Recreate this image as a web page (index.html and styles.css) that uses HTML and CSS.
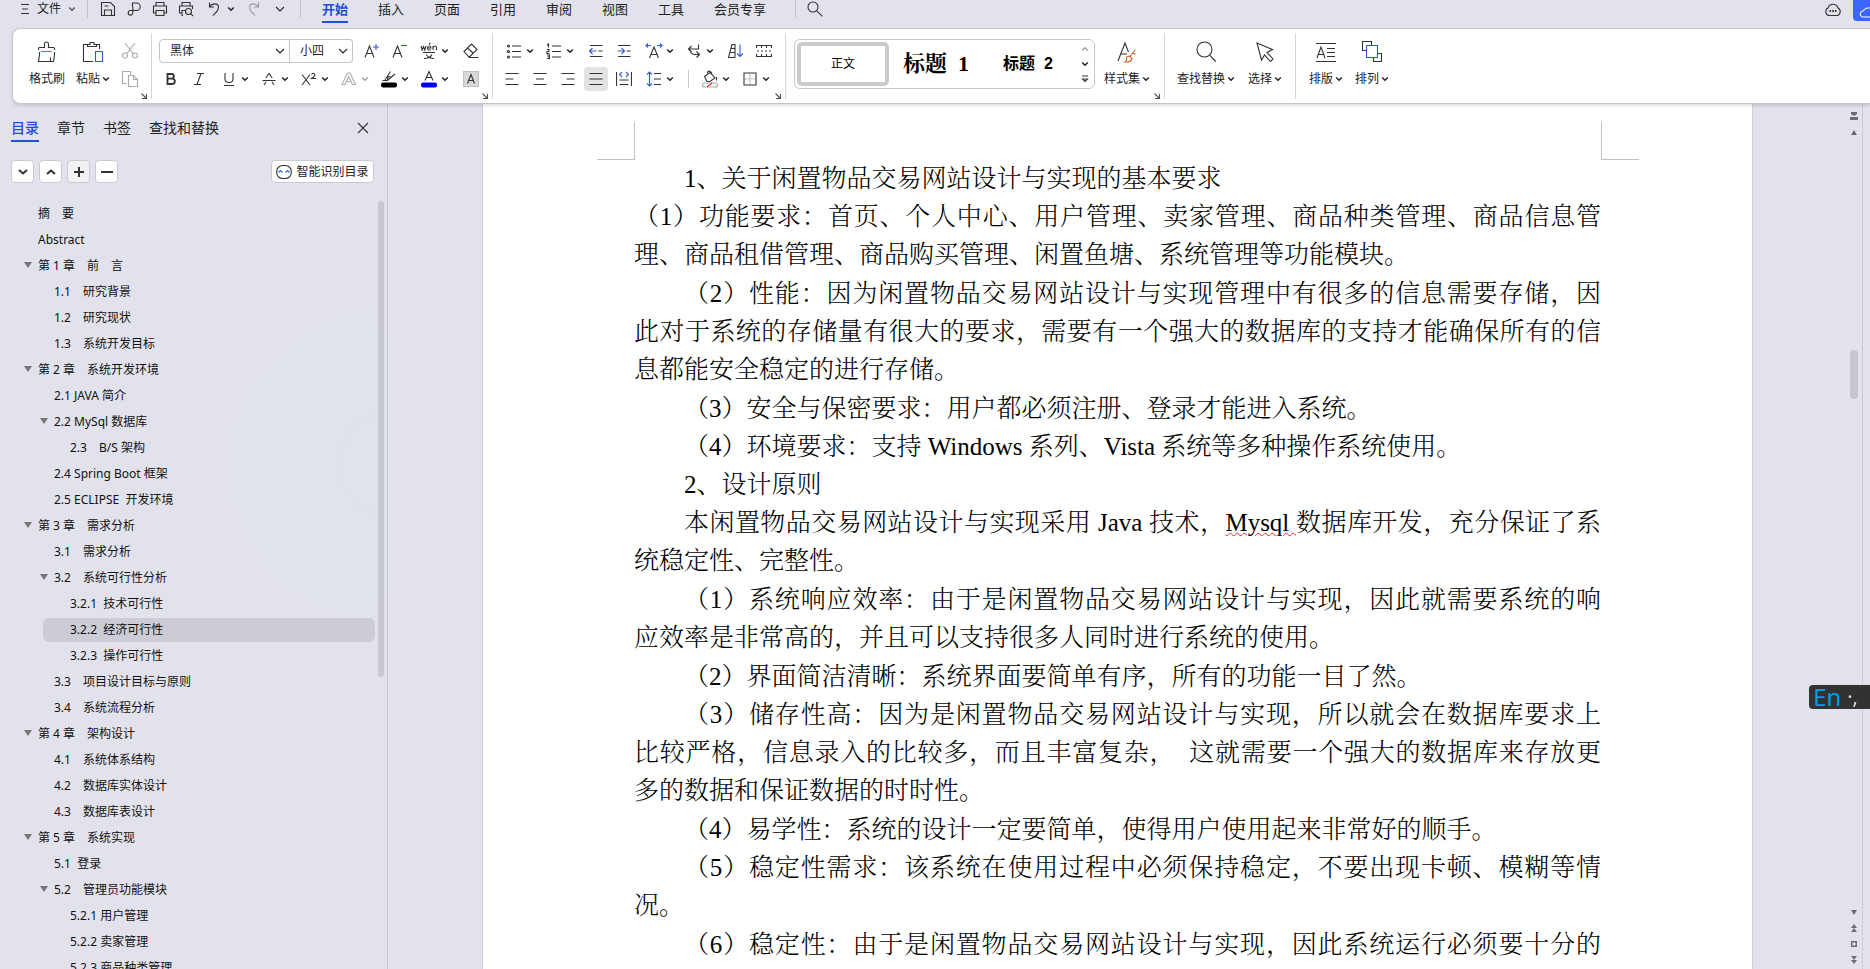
FILE: index.html
```html
<!DOCTYPE html>
<html lang="zh-CN">
<head>
<meta charset="utf-8">
<title>文字处理</title>
<link rel="stylesheet" href="styles.css">
</head>
<body>
<svg class="defs" aria-hidden="true">
  <symbol id="chev" viewBox="0 0 8 8"><path d="M1.2 2.5 4 5.2 6.8 2.5" fill="none" stroke="currentColor" stroke-width="1.5"/></symbol>
  <symbol id="chev-thin" viewBox="0 0 10 10"><path d="M1 3l4 4 4-4" fill="none" stroke="currentColor" stroke-width="1.1"/></symbol>
  <symbol id="launch" viewBox="0 0 6 6"><path d="M.5.5l4.500 4.500M5.500 1v4.500H1" fill="none" stroke="currentColor"/></symbol>
  <symbol id="tri" viewBox="0 0 8 6"><path d="M0 0h8L4 6z" fill="currentColor"/></symbol>
</svg>

<header class="menubar">
  <button class="file-btn"><svg width="10" height="12" viewBox="0 0 10 12"><path d="M1 1.500h8M2 6h6M1 10.500h8"/></svg><span>文件</span><svg class="dim" width="8" height="8"><use href="#chev"/></svg></button>
  <span class="vline"></span>
  <div class="quick">
    <button class="q" aria-label="保存"><svg width="16" height="16" viewBox="0 0 16 16"><path d="M1.500 14.500v-13h9l4 4v9zM4.500 14v-5h7v5M4.500 5h4"/></svg></button>
    <button class="q" aria-label="输出"><svg width="16" height="16" viewBox="0 0 16 16"><path d="M6.500 6V2h4a3.500 3.500 0 0 1 0 7.500H4.500a2.300 2.300 0 1 0 2.300 2.300V6"/></svg></button>
    <button class="q" aria-label="打印"><svg width="16" height="16" viewBox="0 0 16 16"><path d="M4 5V1.500h8V5M4 12H1.500V5h13v7H12M4 9.500h8v5H4z"/></svg></button>
    <button class="q" aria-label="打印预览"><svg width="16" height="16" viewBox="0 0 16 16"><path d="M4 5V1.500h8V5M3.500 12H1.500V5h13v3M5 14.500H4v-5h3"/><circle cx="10.500" cy="10.500" r="3"/><path d="M12.700 12.700l2.500 2.500"/></svg></button>
    <button class="q q-undo" aria-label="撤销"><svg width="16" height="16" viewBox="0 0 16 16"><path d="M3.500 1.500v4.500H8M3.500 6C6 2 12.500 1.500 12.500 6.500c0 3-2.500 5-5.500 8"/></svg></button>
    <button class="q-drop" aria-label="撤销列表"><svg width="8" height="8"><use href="#chev"/></svg></button>
    <button class="q off" aria-label="恢复"><svg width="16" height="16" viewBox="0 0 16 16"><path d="M12.500 1.500v4.500H8M12.500 6C10 2 3.500 1.500 3.500 6.500c0 3 2.500 5 5.500 8"/></svg></button>
    <button class="q" aria-label="更多"><svg width="10" height="10"><use href="#chev-thin"/></svg></button>
  </div>
  <span class="vline"></span>
  <nav class="tabs">
    <a class="tab on" href="#start">开始</a><a class="tab" href="#insert">插入</a><a class="tab" href="#page">页面</a><a class="tab" href="#ref">引用</a><a class="tab" href="#review">审阅</a><a class="tab" href="#view">视图</a><a class="tab" href="#tools">工具</a><a class="tab" href="#member">会员专享</a>
  </nav>
  <span class="vline"></span>
  <button class="search" aria-label="搜索"><svg width="16" height="16" viewBox="0 0 16 16"><circle cx="6" cy="6" r="5"/><path d="M9.800 9.800l5.500 5.500"/></svg></button>
  <div class="menu-right">
    <button class="cloud" aria-label="云同步"><svg width="18" height="16" viewBox="0 0 18 16"><path d="M5 14.500a4 4 0 0 1-1-7.500 5.200 5.200 0 0 1 10 0 4 4 0 0 1-1 7.500z"/><path d="M5.500 10h1.600M8.200 10h1.600M10.900 10h1.600" stroke-width="1.800"/></svg></button>
    <button class="share" aria-label="分享"><svg width="11" height="14" viewBox="0 0 11 14"><path d="M11 13H4a3 3 0 0 1-2-5c2 0 3-3 6-4h3"/></svg></button>
  </div>
</header>

<section class="ribbon" aria-label="开始">
  <div class="group g-clip">
    <button class="big"><svg width="22" height="22" viewBox="0 0 22 22"><path d="M2.500 9V7.500q0-1 1-1h5V3a2 2 0 0 1 4 0v3.500h5q1 0 1 1V9M3.500 11v3l-1 6.500h15l1-6.500v-3M14.500 20v-3.500"/><path class="or" d="M5 10.500h11"/></svg><span>格式刷</span></button>
    <button class="big"><svg width="22" height="22" viewBox="0 0 22 22"><path d="M6 3.500H1.500v17H11M15 3.500h2.500V8M5.500 5.500v-2h2.500v-2h4v2h2.500v2z"/><path class="bl" d="M13.500 10.500h7v10h-7z"/></svg><span>粘贴<svg class="c" width="8" height="8"><use href="#chev"/></svg></span></button>
    <div class="rows narrow">
      <button class="ib off" aria-label="剪切"><svg width="18" height="18" viewBox="0 0 18 18"><path d="M4 1l8.500 11M14 1L5.500 12"/><circle cx="4" cy="13.500" r="2.500"/><circle cx="14" cy="13.500" r="2.500"/></svg></button>
      <button class="ib off" aria-label="复制"><svg width="18" height="18" viewBox="0 0 18 18"><path d="M6 13.500H1.500v-12h8V5M7.500 5.500h5l4 4v7h-9zM12.500 5.500v4h4"/></svg></button>
    </div>
    <button class="launch" aria-label="剪贴板设置"><svg width="6" height="6"><use href="#launch"/></svg></button>
  </div>

  <div class="group g-font">
    <div class="rows">
      <div class="row">
        <div class="combo"><select aria-label="字体"><option>黑体</option></select><svg class="cv" width="10" height="10"><use href="#chev-thin"/></svg></div><div class="combo size"><select aria-label="字号"><option>小四</option></select><svg class="cv" width="10" height="10"><use href="#chev-thin"/></svg></div>
        <button class="ib first" aria-label="增大字号"><svg width="16" height="16" viewBox="0 0 16 16"><path d="M1 14.500L5.500 3 10 14.500M2.700 10.500h5.600"/><path class="bl" d="M12 1v6M9 4h6"/></svg></button>
        <button class="ib" aria-label="减小字号"><svg width="16" height="16" viewBox="0 0 16 16"><path d="M1 14.500L5.500 3 10 14.500M2.700 10.500h5.600"/><path class="bl" d="M9 2.500h6"/></svg></button>
        <button class="db gap3" aria-label="拼音指南"><svg width="18" height="18" viewBox="0 0 18 18"><path d="M1 4l1.200 4L3.500 4.500 4.800 8 6 4M7.500 6h3.500q0-2-1.700-2T7.500 6t1.700 2H11M9 2.500l1.500-1.500M13 8V4M13 5.500q3-3 3.500 0V8M3 10.500h12M6 12.500q3 4 8 4M12 12.500q-2 4-8 4"/></svg><svg class="c" width="8" height="8"><use href="#chev"/></svg></button>
        <button class="ib" aria-label="清除格式"><svg width="18" height="18" viewBox="0 0 18 18"><path d="M2 9.500L9.500 2 15 7.500 8 14.500H6.500zM5.500 6l6 5.500M6.500 15.500h10"/></svg></button>
      </div>
      <div class="row">
        <button class="ib" aria-label="加粗"><svg width="14" height="14" viewBox="0 0 14 14"><path stroke-width="1.800" d="M3.500 2h4a2.300 2.300 0 0 1 0 4.700h-4zM3.500 6.700h4.700a2.600 2.600 0 0 1 0 5.300H3.500z"/></svg></button>
        <button class="ib" aria-label="倾斜"><svg width="14" height="14" viewBox="0 0 14 14"><path d="M5 1.500h7M2 12.500h7M9 1.500L5 12.500"/></svg></button>
        <button class="db gap4" aria-label="下划线"><svg width="14" height="14" viewBox="0 0 14 14"><path d="M3 1v6q0 3.500 4 3.500T11 7V1M2 13.500h10"/></svg><svg class="c" width="8" height="8"><use href="#chev"/></svg></button>
        <button class="db" aria-label="删除线"><svg width="14" height="14" viewBox="0 0 14 14"><path d="M.5 8.500h13M3.800 6L7 1.500 10.200 6M4 10l-2 3M10 10l2 3"/></svg><svg class="c" width="8" height="8"><use href="#chev"/></svg></button>
        <button class="db" aria-label="上标"><svg width="16" height="14" viewBox="0 0 16 14"><path d="M1 2.500l8 10.500M9 2.500L1 13M10.500 2.500q2-2.500 3.500 0 0 1.500-3.500 4H15"/></svg><svg class="c" width="8" height="8"><use href="#chev"/></svg></button>
        <button class="db off" aria-label="文字效果"><svg width="16" height="16" viewBox="0 0 16 16"><path d="M1 13.500L6.500 2h2.500l5.500 11.500h-3L7.700 5.500 4 13.500zM5.500 10.500h4.500"/></svg><svg class="c" width="8" height="8"><use href="#chev"/></svg></button>
        <button class="db" aria-label="突出显示"><svg width="16" height="18" viewBox="0 0 16 18"><path d="M1.500 10.500h5L14 4M4 10L9.500 1.500M6.500 10L7 6.500l3 .5"/><rect x="0" y="12.500" width="16" height="5" rx="2" fill="#000" stroke="none"/></svg><svg class="c" width="8" height="8"><use href="#chev"/></svg></button>
        <button class="db" aria-label="字体颜色"><svg width="16" height="18" viewBox="0 0 16 18"><path d="M4 10.500L8 1.500l4 9M5.500 7.500h5"/><rect x="0" y="12.500" width="16" height="5" rx="2" fill="#00f" stroke="none"/></svg><svg class="c" width="8" height="8"><use href="#chev"/></svg></button>
        <button class="ib" aria-label="字符底纹"><svg width="16" height="16" viewBox="0 0 16 16"><path d="M.5.5h15v15H.5z" fill="#d9d9d9" stroke="#c2c2c2"/><path d="M4.500 12.500L8 3.500l3.500 9M5.500 9.500h5"/></svg></button>
      </div>
    </div>
    <button class="launch" aria-label="字体设置"><svg width="6" height="6"><use href="#launch"/></svg></button>
  </div>

  <div class="group g-para">
    <div class="rows">
      <div class="row">
        <button class="db gap4" aria-label="项目符号"><svg width="16" height="16" viewBox="0 0 16 16"><path d="M6 3h9M6 8.500h9M6 14h9"/><circle cx="2.500" cy="3" r="1"/><circle cx="2.500" cy="8.500" r="1"/><circle cx="2.500" cy="14" r="1"/></svg><svg class="c" width="8" height="8"><use href="#chev"/></svg></button>
        <button class="db" aria-label="编号"><svg width="16" height="16" viewBox="0 0 16 16"><path d="M6 3h9M6 8.500h9M6 14h9M1 2l1.500-1v3.500M1 6.500h2v2H1v2h2.500M1 12h2.500v3.500H1M1.500 13.700h2"/></svg><svg class="c" width="8" height="8"><use href="#chev"/></svg></button>
        <button class="ib" aria-label="减少缩进"><svg width="16" height="16" viewBox="0 0 16 16"><path d="M2 2.500h12.500M10.500 8h4M2 13.500h12.500"/><path class="bl" d="M1.500 8h7M4.500 5L1.500 8l3 3"/></svg></button>
        <button class="ib" aria-label="增加缩进"><svg width="16" height="16" viewBox="0 0 16 16"><path d="M2 2.500h12.500M10.500 8h4M2 13.500h12.500"/><path class="bl" d="M1.500 8h7M5.500 5l3 3-3 3"/></svg></button>
        <button class="db gap4" aria-label="中文版式"><svg width="18" height="16" viewBox="0 0 18 16"><path d="M4.500 15L9 4l4.500 11M6 11.500h6"/><path class="bl" d="M1 2.500h5M3 .5l-2 2 2 2M17 2.500h-5M15 .5l2 2-2 2"/></svg><svg class="c" width="8" height="8"><use href="#chev"/></svg></button>
        <button class="db" aria-label="换行"><svg width="16" height="16" viewBox="0 0 16 16"><path d="M12.500 1.500V6h-10M5.500 3L2.500 6l3 3M4.500 8.500q0 3.500 9 3M10.500 8.500l3 3-3 3"/></svg><svg class="c" width="8" height="8"><use href="#chev"/></svg></button>
        <button class="ib" aria-label="排序"><svg width="18" height="16" viewBox="0 0 18 16"><path d="M1.500 14.500L5 1.500h3v13M4 5.500h4M3 9.500h5M1 14.500h7"/><path class="bl" d="M13 1.500v12M10 10.500l3 3 3-3"/></svg></button>
        <button class="ib" aria-label="制表位"><svg width="16" height="14" viewBox="0 0 16 14"><path d="M.5 4V1.500h15V4M.5 10v2.500h15V10M5.500 1.500V4M10.500 1.500V4M5.500 10v2.500M10.500 10v2.500"/><path d="M1 7h14" stroke-dasharray="2 2"/></svg></button>
      </div>
      <div class="row">
        <button class="ib" aria-label="左对齐"><svg width="14" height="14" viewBox="0 0 14 14"><path d="M.5 1.500h13M.5 7h8M.5 12.500h13"/></svg></button>
        <button class="ib" aria-label="居中"><svg width="14" height="14" viewBox="0 0 14 14"><path d="M.5 1.500h13M3 7h8M.5 12.500h13"/></svg></button>
        <button class="ib" aria-label="右对齐"><svg width="14" height="14" viewBox="0 0 14 14"><path d="M.5 1.500h13M5.500 7h8M.5 12.500h13"/></svg></button>
        <button class="ib pressed" aria-label="两端对齐"><svg width="14" height="14" viewBox="0 0 14 14"><path d="M.5 1.500h13M.5 7h13M.5 12.500h13"/></svg></button>
        <button class="ib" aria-label="分散对齐"><svg width="16" height="16" viewBox="0 0 16 16"><path d="M.5 1v14M15.500 1v14M3.500 9h9M3.500 13.500h9"/><path class="bl" d="M6 1L3.500 3.500 6 6M10 1l2.500 2.500L10 6"/></svg></button>
        <button class="db gap4" aria-label="行距"><svg width="16" height="16" viewBox="0 0 16 16"><path d="M8 2.500h7M8 8h7M8 13.500h7"/><path class="bl" d="M3.500 1v14M1 3.500L3.500 1 6 3.500M1 12.500L3.500 15 6 12.500"/></svg><svg class="c" width="8" height="8"><use href="#chev"/></svg></button>
        <span class="rsep"></span>
        <button class="db" aria-label="底纹"><svg width="18" height="18" viewBox="0 0 18 18"><path d="M3.500 6.500L9 2.500l5 5.500-5 3.500H6zM6 3q2-4 5 .5M15.500 7v3.500"/><rect x="1.500" y="13" width="15" height="4" rx="2" stroke="#aaa"/><path d="M6 17l5-4" stroke="#e33"/></svg><svg class="c" width="8" height="8"><use href="#chev"/></svg></button>
        <button class="db" aria-label="边框"><svg width="14" height="14" viewBox="0 0 14 14"><path d="M1 1h12v12H1z"/><path d="M7 2v10M2 7h10" stroke="#aaa" stroke-dasharray="2 1"/></svg><svg class="c" width="8" height="8"><use href="#chev"/></svg></button>
      </div>
    </div>
    <button class="launch" aria-label="段落设置"><svg width="6" height="6"><use href="#launch"/></svg></button>
  </div>

  <div class="group g-style">
    <div class="gallery">
      <button class="style s-body on">正文</button>
      <button class="style s-h1">标题&nbsp; 1</button>
      <button class="style s-h2">标题&nbsp; 2</button>
      <div class="scroll"><button class="off" aria-label="上一行"><svg class="flip" width="8" height="8"><use href="#chev"/></svg></button><button aria-label="下一行"><svg width="8" height="8"><use href="#chev"/></svg></button><button aria-label="展开"><svg width="8" height="8" viewBox="0 0 8 8"><path d="M1 1h6M1.500 4h5L4 6.500z"/></svg></button></div>
    </div>
    <button class="big"><svg width="22" height="22" viewBox="0 0 22 22"><path d="M2 20L9 2l3.500 9M5 13h6"/><path class="or" d="M19.500 8.500l-5.500 7M16.500 11.500l3 2M13.500 15l2.500 2.500q-1 4-7 3.500 2-1 1.500-3.500t3-2.500z"/></svg><span>样式集<svg class="c" width="8" height="8"><use href="#chev"/></svg></span></button>
    <button class="launch" aria-label="样式设置"><svg width="6" height="6"><use href="#launch"/></svg></button>
  </div>

  <div class="group g-find">
    <button class="big"><svg width="22" height="22" viewBox="0 0 22 22"><circle cx="9.500" cy="8.500" r="7.500"/><path d="M14.800 14.300l6 6.200"/></svg><span>查找替换<svg class="c" width="8" height="8"><use href="#chev"/></svg></span></button>
    <button class="big"><svg width="22" height="22" viewBox="0 0 22 22"><path d="M3 2l15.500 6.500-5.500 3 6 6.500-2.500 2.500-6-6.500-3 5z"/></svg><span>选择<svg class="c" width="8" height="8"><use href="#chev"/></svg></span></button>
  </div>

  <div class="group g-arr">
    <button class="big"><svg width="22" height="22" viewBox="0 0 22 22"><path d="M1 2.500h20M1 20.500h20M2 17l4-11 4 11M3.500 13.500h5M12 7.500h8M12 11.500h8M12 15.500h8"/></svg><span>排版<svg class="c" width="8" height="8"><use href="#chev"/></svg></span></button>
    <button class="big"><svg width="22" height="22" viewBox="0 0 22 22"><path d="M5 9.500H1.500v-9h9V4M17 12.500h3.500v8h-8V17"/><path class="bl" d="M5.500 4.500h11v12h-11z"/></svg><span>排列<svg class="c" width="8" height="8"><use href="#chev"/></svg></span></button>
  </div>
</section>

<main class="main">
  <aside class="side">
    <div class="side-tabs">
      <a class="st on" href="#toc">目录</a><a class="st" href="#chapters">章节</a><a class="st" href="#marks">书签</a><a class="st" href="#find">查找和替换</a>
      <button class="close" aria-label="关闭"><svg width="12" height="12" viewBox="0 0 12 12"><path d="M1 1l10 10M11 1L1 11"/></svg></button>
    </div>
    <div class="side-tools">
      <button class="sq" aria-label="展开"><svg width="10" height="8" viewBox="0 0 10 8"><path d="M1 2l4 3.500L9 2"/></svg></button>
      <button class="sq" aria-label="收起"><svg width="10" height="8" viewBox="0 0 10 8"><path d="M1 6l4-3.500L9 6"/></svg></button>
      <button class="sq hover" aria-label="增加级别"><svg width="10" height="10" viewBox="0 0 10 10"><path d="M0 5h10M5 0v10"/></svg></button>
      <button class="sq" aria-label="减少级别"><svg width="12" height="10" viewBox="0 0 12 10"><path d="M0 5h12"/></svg></button>
      <button class="smart"><svg width="16" height="16" viewBox="0 0 16 16"><rect x=".7" y="1.500" width="14.600" height="13" rx="6"/><path class="bl" d="M2.500 8.500l2-2 2 2M9.500 8.500l2-2 2 2"/></svg>智能识别目录</button>
    </div>
    <div class="tree-wrap">
      <ul class="tree">
        <li class="l1">摘　要</li>
        <li class="l1">Abstract</li>
        <li class="l1 open"><svg width="8" height="6"><use href="#tri"/></svg>第 1 章　前　言</li>
        <li class="l2">1.1　研究背景</li>
        <li class="l2">1.2　研究现状</li>
        <li class="l2">1.3　系统开发目标</li>
        <li class="l1 open"><svg width="8" height="6"><use href="#tri"/></svg>第 2 章　系统开发环境</li>
        <li class="l2">2.1 JAVA 简介</li>
        <li class="l2 open"><svg width="8" height="6"><use href="#tri"/></svg>2.2 MySql 数据库</li>
        <li class="l3">2.3　B/S 架构</li>
        <li class="l2">2.4 Spring Boot 框架</li>
        <li class="l2">2.5 ECLIPSE&nbsp; 开发环境</li>
        <li class="l1 open"><svg width="8" height="6"><use href="#tri"/></svg>第 3 章　需求分析</li>
        <li class="l2">3.1　需求分析</li>
        <li class="l2 open"><svg width="8" height="6"><use href="#tri"/></svg>3.2　系统可行性分析</li>
        <li class="l3">3.2.1&nbsp; 技术可行性</li>
        <li class="l3 sel">3.2.2&nbsp; 经济可行性</li>
        <li class="l3">3.2.3&nbsp; 操作可行性</li>
        <li class="l2">3.3　项目设计目标与原则</li>
        <li class="l2">3.4　系统流程分析</li>
        <li class="l1 open"><svg width="8" height="6"><use href="#tri"/></svg>第 4 章　架构设计</li>
        <li class="l2">4.1　系统体系结构</li>
        <li class="l2">4.2　数据库实体设计</li>
        <li class="l2">4.3　数据库表设计</li>
        <li class="l1 open"><svg width="8" height="6"><use href="#tri"/></svg>第 5 章　系统实现</li>
        <li class="l2">5.1&nbsp; 登录</li>
        <li class="l2 open"><svg width="8" height="6"><use href="#tri"/></svg>5.2　管理员功能模块</li>
        <li class="l3">5.2.1 用户管理</li>
        <li class="l3">5.2.2 卖家管理</li>
        <li class="l3">5.2.3 商品种类管理</li>
      </ul>
      <div class="tree-bar"></div>
    </div>
  </aside>

  <div class="work">
    <article class="page">
      <div class="marks"><i class="mk left"></i><i class="mk right"></i></div>
      <div class="doc">
        <p>1、关于闲置物品交易网站设计与实现的基本要求</p>
        <p class="flat long"><span class="full">（1）功能要求：首页、个人中心、用户管理、卖家管理、商品种类管理、商品信息管</span><span class="rest">理、商品租借管理、商品购买管理、闲置鱼塘、系统管理等功能模块。</span></p>
        <p class="long"><span class="full ind">（2）性能：因为闲置物品交易网站设计与实现管理中有很多的信息需要存储，因</span><span class="full">此对于系统的存储量有很大的要求，需要有一个强大的数据库的支持才能确保所有的信</span><span class="rest">息都能安全稳定的进行存储。</span></p>
        <p>（3）安全与保密要求：用户都必须注册、登录才能进入系统。</p>
        <p>（4）环境要求：支持 Windows 系列、Vista 系统等多种操作系统使用。</p>
        <p>2、设计原则</p>
        <p class="long"><span class="full ind">本闲置物品交易网站设计与实现采用 Java 技术，<span class="typo">Mysql </span>数据库开发，充分保证了系</span><span class="rest">统稳定性、完整性。</span></p>
        <p class="long"><span class="full ind">（1）系统响应效率：由于是闲置物品交易网站设计与实现，因此就需要系统的响</span><span class="rest">应效率是非常高的，并且可以支持很多人同时进行系统的使用。</span></p>
        <p>（2）界面简洁清晰：系统界面要简单有序，所有的功能一目了然。</p>
        <p class="long"><span class="full ind">（3）储存性高：因为是闲置物品交易网站设计与实现，所以就会在数据库要求上</span><span class="full">比较严格，信息录入的比较多，而且丰富复杂，&nbsp; 这就需要一个强大的数据库来存放更</span><span class="rest">多的数据和保证数据的时时性。</span></p>
        <p>（4）易学性：系统的设计一定要简单，使得用户使用起来非常好的顺手。</p>
        <p class="long"><span class="full ind">（5）稳定性需求：该系统在使用过程中必须保持稳定，不要出现卡顿、模糊等情</span><span class="rest">况。</span></p>
        <p><span class="full ind">（6）稳定性：由于是闲置物品交易网站设计与实现，因此系统运行必须要十分的</span></p>
      </div>
    </article>
    <div class="vbar">
      <svg width="8" height="9" viewBox="0 0 8 9"><path d="M1 0h6v2L4 4 1 2zM0 5h8v3H0z"/></svg>
      <svg class="up" width="6" height="5" viewBox="0 0 6 5"><path d="M0 5h6L3 0z"/></svg>
      <div class="thumb"></div>
      <div class="vend">
        <svg width="6" height="5" viewBox="0 0 6 5"><path d="M0 0h6L3 5z"/></svg>
        <svg width="6" height="8" viewBox="0 0 6 8"><path d="M0 4h6L3 0zM0 8h6L3 4z"/></svg>
        <svg width="6" height="6" viewBox="0 0 6 6"><path d="M0 0h6v6H0zM1.500 1.500v3h3v-3z" fill-rule="evenodd"/></svg>
        <svg width="6" height="8" viewBox="0 0 6 8"><path d="M0 0h6L3 4zM0 4h6L3 8z"/></svg>
      </div>
    </div>
  </div>
</main>
<div class="ime"><span class="en">En</span><span class="pt">·,</span></div>
</body>
</html>
```
FILE: styles.css
```css
* { box-sizing: border-box; }
html, body { height: 100%; }
body {
  margin: 0;
  display: flex;
  flex-direction: column;
  overflow: hidden;
  background: #e2e2ec;
  color: #222;
  font: 12px/16px "Noto Sans", "Noto Sans CJK SC", sans-serif;
}
button { margin: 0; padding: 0; border: 0; background: none; font: inherit; color: inherit; }
a { color: inherit; text-decoration: none; }
svg { display: block; flex: none; fill: none; stroke: #333; stroke-width: 1.1; }
svg use { stroke: none; }
.defs { position: absolute; width: 0; height: 0; }
.bl { stroke: #2a5be0; }
.or { stroke: #d8622b; }
.off { opacity: .4; }
.flip { transform: rotate(180deg); }

/* menu bar */
.menubar { display: flex; flex: none; align-items: flex-start; height: 28px; padding-left: 17px; }
.menubar button { display: flex; align-items: center; justify-content: center; height: 18px; }
.file-btn { gap: 7px; width: 62px; }
.menubar .dim { opacity: .7; }
.vline { width: 1px; height: 18px; background: #c3c3cc; }
.file-btn + .vline { margin-left: 8px; }
.quick { display: flex; padding: 0 7px; }
.q { width: 26px; }
.q-undo { width: 22px; margin-left: 4px; }
.q-drop { width: 12px; margin-right: 4px; }
.tabs { display: flex; gap: 30px; margin-left: 21px; margin-right: 29px; font-size: 13px; line-height: 18px; }
.tab { height: 23px; border-bottom: 2px solid transparent; }
.tab.on { color: #1f4fdc; font-weight: 700; border-color: #1f4fdc; }
.search { width: 38px; }
.menu-right { display: flex; margin-left: auto; gap: 11px; }
.share { width: 17px; border-radius: 0 0 0 4px; background: #3a66ff; }
.menubar .share { height: 21px; justify-content: flex-end; }
.share svg { stroke: #fff; }

/* ribbon */
.ribbon {
  position: relative;
  z-index: 2;
  display: flex;
  flex: none;
  margin-left: 12px;
  padding: 4px 0;
  background: #fff;
  border: 1px solid #c6c6d0;
  border-right: 0;
  border-radius: 8px 0 0 8px;
  box-shadow: 0 2px 3px rgba(60, 60, 80, .16);
}
.group { position: relative; display: flex; height: 66px; padding-top: 6px; border-right: 1px solid #d6d6d6; }
.g-arr { border: 0; }
.rows { display: flex; flex-direction: column; gap: 4px; }
.row { display: flex; height: 24px; }
.ib { display: flex; align-items: center; justify-content: center; height: 24px; width: 28px; }
.db { display: grid; grid-template-columns: 24px 8px; justify-content: start; align-items: center; justify-items: center; width: 40px; height: 24px; }
.gap4 { margin-left: 4px; }
.gap3 { margin-left: 3px; }
.pressed { background: #e3e3e3; border-radius: 4px; width: 24px; margin: 0 2px; }
.big { display: flex; flex-direction: column; align-items: center; gap: 8px; width: 46px; padding-top: 2px; white-space: nowrap; }
.big > span { display: flex; align-items: center; gap: 2px; height: 16px; }
.launch { position: absolute; right: 4px; bottom: 0; opacity: .8; }
.g-clip { padding-left: 11px; padding-right: 7px; }
.g-font { padding-left: 5px; padding-right: 7px; }
.g-font .first { margin-left: 5px; }
.combo { position: relative; width: 131px; margin-left: 2px; border: 1px solid #c4c4c4; border-radius: 4px 0 0 4px; }
.combo.size { width: 63px; margin-left: 0; border-left: 0; border-radius: 0 4px 4px 0; }
.combo select { appearance: none; width: 100%; height: 22px; padding: 0 0 0 10px; border: 0; background: transparent; font: 12px/20px "Noto Sans", "Noto Sans CJK SC", sans-serif; color: #222; }
.cv { position: absolute; right: 4px; top: 6px; }
.g-para { padding-left: 5px; padding-right: 7px; }
.rsep { width: 1px; height: 18px; margin: 3px 9px 0 6px; background: #ccc; }
.g-style { padding-left: 8px; padding-right: 14px; gap: 9px; }
.gallery { display: flex; align-items: stretch; width: 301px; height: 50px; padding: 2px; border: 1px solid #c8c8c8; border-radius: 6px; }
.style { width: 92px; color: #000; white-space: nowrap; }
.s-body.on { border: 4px solid #cbcbcb; border-radius: 5px; }
.s-h1 { width: 94px; font: 700 22px/24px "Liberation Serif", "Noto Serif CJK SC", "Noto Sans CJK SC", serif; }
.s-h2 { width: 90px; font: 700 16px/20px "Liberation Sans", "Noto Sans CJK SC", sans-serif; }
.scroll { display: flex; flex-direction: column; justify-content: space-around; margin-left: auto; padding-right: 3px; }
.g-find { padding-left: 9px; padding-right: 7px; gap: 4px; }
.g-find .big:first-child { width: 64px; }
.g-arr { padding-left: 7px; }

/* body */
.main { display: flex; flex: 1; min-height: 0; }
.side {
  display: flex;
  flex-direction: column;
  flex: none;
  width: 388px;
  padding: 14px 3px 0 11px;
  border-right: 1px solid #c9c9cf;
  background: radial-gradient(circle at 390px 360px, #dfe3ec 0, #e2e2ec 220px);
}
.side-tabs { display: flex; gap: 18px; font-size: 14px; line-height: 20px; }
.st { height: 24px; border-bottom: 2px solid transparent; }
.st.on { color: #1f4fdc; font-weight: 500; border-color: #1f4fdc; }
.close { margin-left: auto; margin-right: 15px; height: 20px; }
.side-tools { display: flex; gap: 5px; margin: 18px 10px 0 0; }
.sq, .smart { display: flex; align-items: center; justify-content: center; width: 23px; height: 23px; background: #fff; border: 1px solid #cacad2; border-radius: 4px; }
.sq svg { stroke-width: 2; }
.sq.hover { background: #f2f2f2; }
.smart { width: 103px; gap: 4px; margin-left: auto; white-space: nowrap; }
.tree-wrap { display: flex; flex: 1; min-height: 0; margin-top: 18px; overflow: hidden; }
.tree { flex: 1; margin: 0; padding: 1px 0 0; list-style: none; color: #111; }
.tree li { position: relative; height: 24px; margin-bottom: 2px; padding-left: 27px; line-height: 24px; border-radius: 6px; white-space: nowrap; }
.tree li svg { position: absolute; left: 13px; top: 8px; color: #777; }
.tree .l1 { margin-left: 0; }
.tree .l2 { margin-left: 16px; }
.tree .l3 { margin-left: 32px; }
.tree .sel { background: #cbccd5; }
.tree-bar { width: 6px; height: 62%; margin-left: 3px; border-radius: 3px; background: #c8c9d0; }

.work { display: flex; flex: 1; min-width: 0; margin-right: 7px; border-right: 1px solid #cbcbd2; }
.page { flex: 1; min-width: 0; margin: 0 94px 0 95px; padding: 0 151px; background: #fff; box-shadow: 0 0 2px #aaaab4; }
.marks { display: flex; justify-content: space-between; height: 56px; margin: 0 -38px 0 -37px; padding-top: 18px; }
.mk { width: 38px; border-bottom: 1px solid #c2c2c2; }
.mk.left { border-right: 1px solid #c2c2c2; }
.mk.right { border-left: 1px solid #c2c2c2; }
.doc { color: #000; font: 400 25px/38px "Liberation Serif", "Noto Serif CJK SC", "Noto Sans CJK SC", serif; font-weight: 300; }
.doc p { margin: 0; text-indent: 2em; }
.doc .long { margin-bottom: 1px; }
.doc .flat, .doc .full, .doc .rest { text-indent: 0; }
.full, .rest { display: block; white-space: nowrap; }
.full { text-align: justify; text-align-last: justify; }
.doc .ind { text-indent: 2em; }
.typo { text-decoration: underline wavy #e22 1px; }
.vbar { display: flex; flex-direction: column; align-items: center; flex: none; width: 16px; padding: 8px 0 5px; }
.vbar svg { fill: #6c6c70; stroke: none; }
.vbar .up { margin-top: 9px; }
.thumb { width: 8px; height: 49px; margin-top: 215px; border-radius: 4px; background: #c6c7ce; }
.vend { display: flex; flex-direction: column; align-items: center; gap: 9px; margin-top: auto; }

.ime { position: fixed; right: 0; bottom: 260px; z-index: 3; display: flex; align-items: center; gap: 6px; width: 61px; height: 24px; padding-left: 4px; border-radius: 4px 0 0 4px; background: #323232; color: #ddd; white-space: nowrap; }
.en { color: #00a0e9; font-size: 24px; line-height: 24px; }
.pt { font-size: 20px; line-height: 24px; }
```
